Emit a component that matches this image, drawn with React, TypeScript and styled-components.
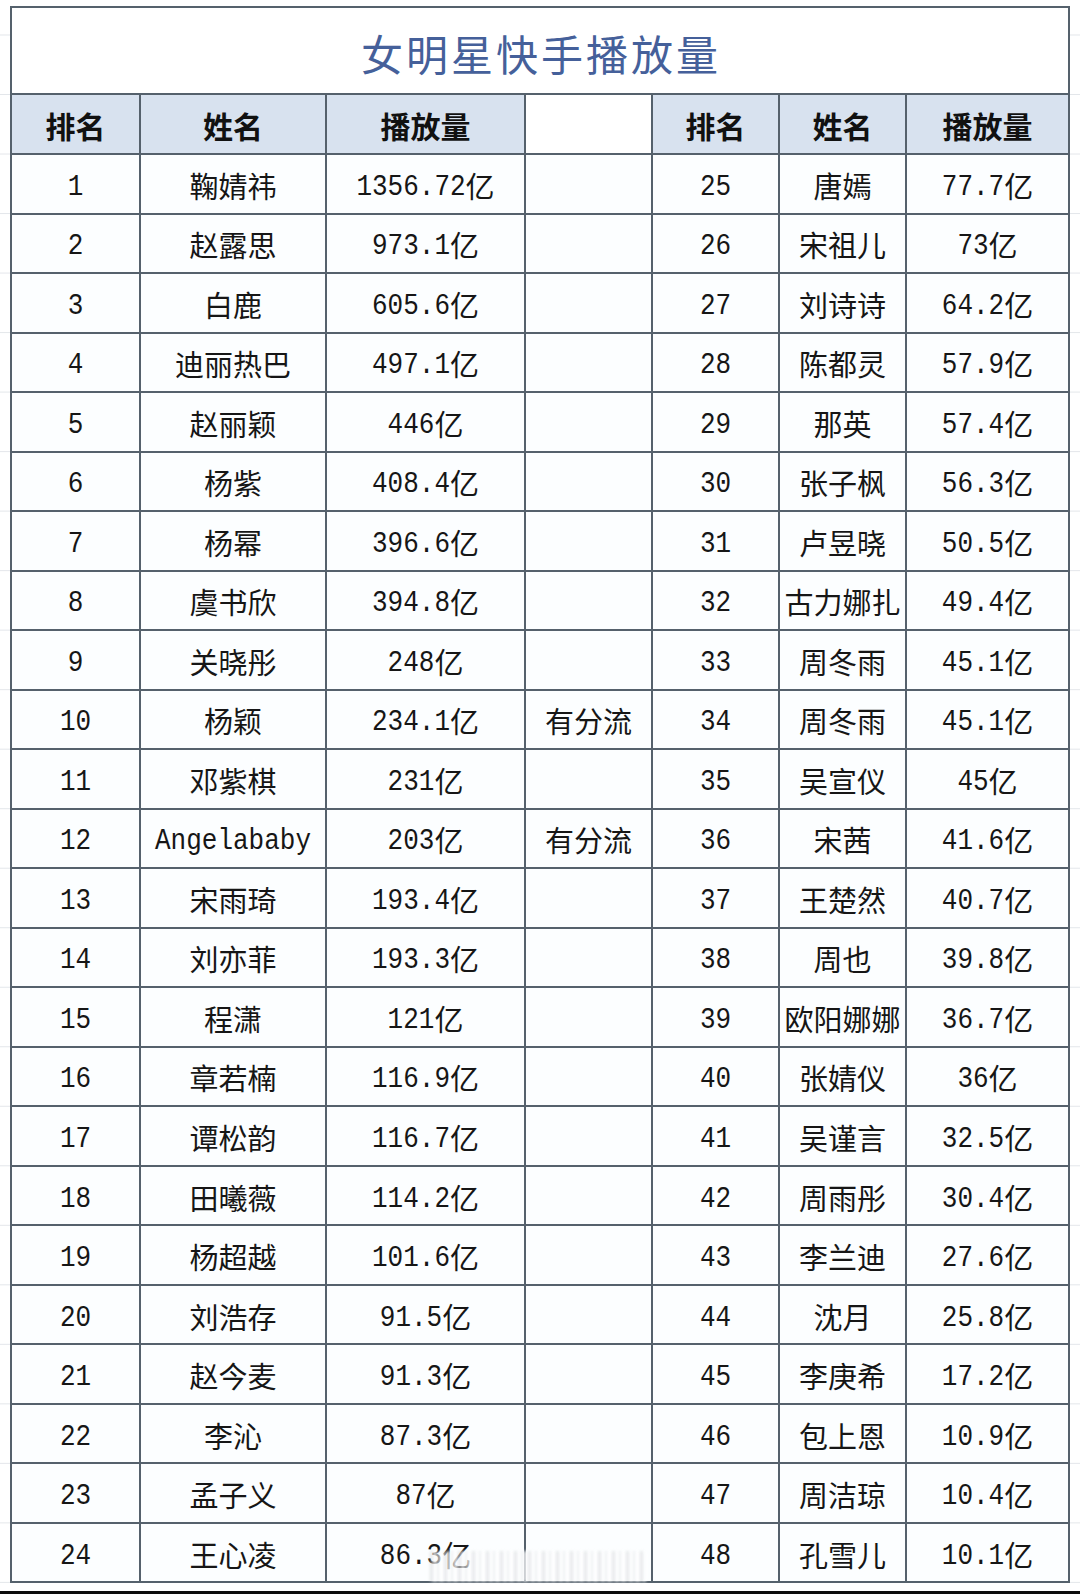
import React from "react";
import styled, { createGlobalStyle } from "styled-components";

const GlobalStyle = createGlobalStyle`
  html, body { margin: 0; padding: 0; }
  body {
    width: 1080px;
    height: 1594px;
    overflow: hidden;
    background-color: #ffffff;
    background-image: linear-gradient(
      to bottom,
      transparent 0,
      transparent 58.5px,
      #e3e6ea 58.5px,
      #e3e6ea 59.53px
    );
    background-size: 100% 59.53px;
    background-position: 0 95px;
    font-family: "Noto Sans CJK SC", "Noto Sans", sans-serif;
  }
`;

const BORDER = "2px solid #55616c";

const Page = styled.main`
  position: relative;
  height: 1594px;
  box-sizing: border-box;
  padding: 6px 0 0 10px;
  display: flex;
  flex-direction: column;
`;

const Sheet = styled.section`
  display: grid;
  width: fit-content;
  grid-template-columns: 129px 186px 199px 127px 127px 127px 163px;
  grid-template-rows: 87px 60px repeat(24, 59.53px);
  border-left: ${BORDER};
  border-top: ${BORDER};
  background: #ffffff;
`;

const Title = styled.h1`
  grid-column: 1 / -1;
  margin: 0;
  box-sizing: border-box;
  border-right: ${BORDER};
  border-bottom: ${BORDER};
  display: flex;
  align-items: center;
  justify-content: center;
  padding-top: 4px;
  padding-left: 2px;
  font-family: "Noto Sans CJK SC", sans-serif;
  font-size: 42px;
  font-weight: 400;
  letter-spacing: 3px;
  color: #45609a;
  background: #ffffff;
`;

const HeadCell = styled.div<{ $blank?: boolean }>`
  box-sizing: border-box;
  border-right: ${BORDER};
  border-bottom: ${BORDER};
  display: flex;
  align-items: center;
  justify-content: center;
  padding-top: 2px;
  font-family: "Noto Sans CJK SC", sans-serif;
  font-size: 30px;
  font-weight: 700;
  color: #111111;
  background: ${(p) => (p.$blank ? "#ffffff" : "#d8e2ef")};
`;

const Cell = styled.div`
  box-sizing: border-box;
  border-right: ${BORDER};
  border-bottom: ${BORDER};
  display: flex;
  align-items: center;
  justify-content: center;
  padding-top: 2px;
  white-space: nowrap;
  font-family: "Noto Sans CJK SC", sans-serif;
  font-size: 29px;
  font-weight: 400;
  color: #161616;
  background: #fcfeff;
`;

const Latin = styled.span`
  display: inline-block;
  font-family: "Liberation Mono", "DejaVu Sans Mono", monospace;
  font-size: 26px;
  transform: translateY(3px) scaleY(1.16);
  transform-origin: 50% 72%;
`;

const Unit = styled.span`
  font-family: "Noto Sans CJK SC", sans-serif;
  font-size: 29px;
`;

const Watermark = styled.div`
  position: absolute;
  left: 430px;
  top: 1551px;
  width: 216px;
  height: 31px;
  background:
    repeating-linear-gradient(
      90deg,
      rgba(205, 208, 212, 0.55) 0 3px,
      rgba(255, 255, 255, 0.85) 3px 7px,
      rgba(215, 218, 222, 0.45) 7px 9px,
      rgba(255, 255, 255, 0.85) 9px 14px
    );
  filter: blur(1.6px);
  opacity: 0.9;
`;

const BottomBar = styled.div`
  margin-top: auto;
  margin-left: -10px;
  height: 3px;
  background: #0c0c0c;
`;

type Row = [string, string, string, string];
type RightRow = [string, string, string];

const left: Row[] = [
  ["1", "鞠婧祎", "1356.72亿", ""],
  ["2", "赵露思", "973.1亿", ""],
  ["3", "白鹿", "605.6亿", ""],
  ["4", "迪丽热巴", "497.1亿", ""],
  ["5", "赵丽颖", "446亿", ""],
  ["6", "杨紫", "408.4亿", ""],
  ["7", "杨幂", "396.6亿", ""],
  ["8", "虞书欣", "394.8亿", ""],
  ["9", "关晓彤", "248亿", ""],
  ["10", "杨颖", "234.1亿", "有分流"],
  ["11", "邓紫棋", "231亿", ""],
  ["12", "Angelababy", "203亿", "有分流"],
  ["13", "宋雨琦", "193.4亿", ""],
  ["14", "刘亦菲", "193.3亿", ""],
  ["15", "程潇", "121亿", ""],
  ["16", "章若楠", "116.9亿", ""],
  ["17", "谭松韵", "116.7亿", ""],
  ["18", "田曦薇", "114.2亿", ""],
  ["19", "杨超越", "101.6亿", ""],
  ["20", "刘浩存", "91.5亿", ""],
  ["21", "赵今麦", "91.3亿", ""],
  ["22", "李沁", "87.3亿", ""],
  ["23", "孟子义", "87亿", ""],
  ["24", "王心凌", "86.3亿", ""],
];

const right: RightRow[] = [
  ["25", "唐嫣", "77.7亿"],
  ["26", "宋祖儿", "73亿"],
  ["27", "刘诗诗", "64.2亿"],
  ["28", "陈都灵", "57.9亿"],
  ["29", "那英", "57.4亿"],
  ["30", "张子枫", "56.3亿"],
  ["31", "卢昱晓", "50.5亿"],
  ["32", "古力娜扎", "49.4亿"],
  ["33", "周冬雨", "45.1亿"],
  ["34", "周冬雨", "45.1亿"],
  ["35", "吴宣仪", "45亿"],
  ["36", "宋茜", "41.6亿"],
  ["37", "王楚然", "40.7亿"],
  ["38", "周也", "39.8亿"],
  ["39", "欧阳娜娜", "36.7亿"],
  ["40", "张婧仪", "36亿"],
  ["41", "吴谨言", "32.5亿"],
  ["42", "周雨彤", "30.4亿"],
  ["43", "李兰迪", "27.6亿"],
  ["44", "沈月", "25.8亿"],
  ["45", "李庚希", "17.2亿"],
  ["46", "包上恩", "10.9亿"],
  ["47", "周洁琼", "10.4亿"],
  ["48", "孔雪儿", "10.1亿"],
];

const Name = ({ text }: { text: string }) =>
  /^[A-Za-z]+$/.test(text) ? <Latin>{text}</Latin> : <>{text}</>;

const Value = ({ text }: { text: string }) => {
  const num = text.replace("亿", "");
  return (
    <>
      <Latin>{num}</Latin>
      <Unit>亿</Unit>
    </>
  );
};

export default function App() {
  return (
    <>
      <GlobalStyle />
      <Page>
        <Sheet>
          <Title>女明星快手播放量</Title>
          <HeadCell>排名</HeadCell>
          <HeadCell>姓名</HeadCell>
          <HeadCell>播放量</HeadCell>
          <HeadCell $blank />
          <HeadCell>排名</HeadCell>
          <HeadCell>姓名</HeadCell>
          <HeadCell>播放量</HeadCell>
          {left.map((l, i) => {
            const r = right[i];
            return (
              <React.Fragment key={l[0]}>
                <Cell>
                  <Latin>{l[0]}</Latin>
                </Cell>
                <Cell>
                  <Name text={l[1]} />
                </Cell>
                <Cell>
                  <Value text={l[2]} />
                </Cell>
                <Cell>{l[3]}</Cell>
                <Cell>
                  <Latin>{r[0]}</Latin>
                </Cell>
                <Cell>
                  <Name text={r[1]} />
                </Cell>
                <Cell>
                  <Value text={r[2]} />
                </Cell>
              </React.Fragment>
            );
          })}
        </Sheet>
        <Watermark />
        <BottomBar />
      </Page>
    </>
  );
}
